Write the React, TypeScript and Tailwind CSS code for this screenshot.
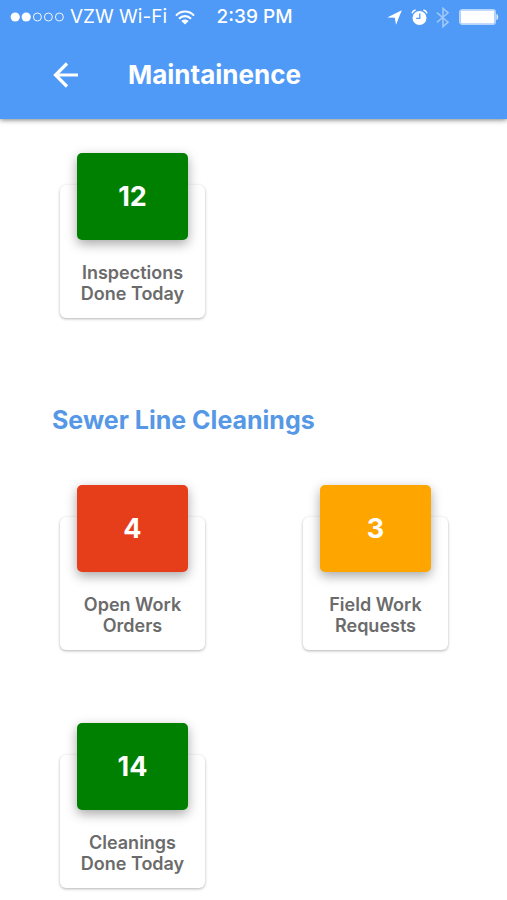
import React from 'react'

type Stat = {
  value: number
  lines: [string, string]
  color: string
}

const inspectionStats: Stat[] = [
  { value: 12, lines: ['Inspections', 'Done Today'], color: 'bg-[#008000]' },
]

const cleaningStats: Stat[] = [
  { value: 4, lines: ['Open Work', 'Orders'], color: 'bg-[#e63e1a]' },
  { value: 3, lines: ['Field Work', 'Requests'], color: 'bg-[#ffa500]' },
  { value: 14, lines: ['Cleanings', 'Done Today'], color: 'bg-[#008000]' },
]

const StatusBar = () => (
  <div className="flex h-[34px] items-center pl-2.5 pr-2 text-[19px] leading-6">
    <div className="flex flex-1 items-center">
      <svg width="56" height="12" viewBox="0 0 56 12" fill="none" stroke="currentColor" aria-label="Signal">
        <circle cx="5.2" cy="6" r="4.6" fill="currentColor" stroke="none" />
        <circle cx="16.2" cy="6" r="4.6" fill="currentColor" stroke="none" />
        <circle cx="27.4" cy="6" r="4" strokeWidth="0.9" />
        <circle cx="38.4" cy="6" r="4" strokeWidth="0.9" />
        <circle cx="49.4" cy="6" r="4" strokeWidth="0.9" />
      </svg>
      <span className="ml-1 whitespace-nowrap">VZW Wi-Fi</span>
      <svg className="ml-2" width="20" height="15" viewBox="0 0 20 15" fill="none" stroke="currentColor" strokeWidth="2.1" aria-label="Wi-Fi">
        <path d="M1 5.6C6 .2 14 .2 19 5.6" />
        <path d="M4 8.8C7.4 5.2 12.6 5.2 16 8.8" />
        <path d="M10 14.6L6.4 11C8.4 9 11.6 9 13.6 11Z" fill="currentColor" stroke="none" />
      </svg>
    </div>
    <time className="font-medium">2:39 PM</time>
    <div className="flex flex-1 items-center justify-end">
      <svg width="15" height="15" viewBox="0 0 15 15" fill="currentColor" aria-label="Location">
        <path d="M14.8.2L9 14.8L7.8 7.8L.2 7.4Z" />
      </svg>
      <svg className="ml-[9px]" width="17" height="17" viewBox="0 0 17 17" fill="none" stroke="currentColor" aria-label="Alarm">
        <circle cx="8.5" cy="9" r="7" fill="currentColor" stroke="none" />
        <path d="M1 4.4C1.5 2.6 2.8 1.4 4.6 1M16 4.4C15.5 2.6 14.2 1.4 12.4 1" strokeWidth="1.5" />
        <path d="M8.8 4.6V9.4H5.2" stroke="#4f99f7" strokeWidth="1.3" />
      </svg>
      <svg className="ml-2 opacity-45" width="14" height="21" viewBox="0 0 14 21" fill="none" stroke="currentColor" strokeWidth="1.6" aria-label="Bluetooth">
        <path d="M1 5.6L12 15.2L7 19.6V1.4L12 5.8L1 15.4" />
      </svg>
      <svg className="ml-[9px]" width="40" height="16" viewBox="0 0 40 16" aria-label="Battery">
        <rect x="0.7" y="0.7" width="35.6" height="14.6" rx="2.6" fill="none" stroke="currentColor" strokeOpacity="0.6" strokeWidth="1.4" />
        <rect x="1.6" y="1.6" width="33.8" height="12.8" rx="1.4" fill="currentColor" />
        <path d="M37.4 5C39.8 5.4 39.8 10.6 37.4 11Z" fill="currentColor" fillOpacity="0.8" />
      </svg>
    </div>
  </div>
)

const StatCard = ({ stat }: { stat: Stat }) => (
  <article className="mt-8 flex w-[145px] flex-col items-center rounded-md bg-white pb-3.5 shadow-[0_1px_3px_rgba(0,0,0,0.3)]">
    <div
      className={`-mt-8 flex h-[87px] w-[111px] items-center justify-center rounded-[5px] text-[27px] font-bold leading-8 text-white shadow-[0_4px_12px_rgba(0,0,0,0.35)] ${stat.color}`}
    >
      {stat.value}
    </div>
    <h3 className="mt-[22px] text-center text-lg font-semibold leading-[21px] text-[#6b6b6b]">
      {stat.lines[0]}
      <br />
      {stat.lines[1]}
    </h3>
  </article>
)

const StatGrid = ({ stats }: { stats: Stat[] }) => (
  <div className="grid grid-cols-2 justify-items-center gap-y-[73px] pl-[11px] pr-2.5">
    {stats.map((stat) => (
      <StatCard key={stat.lines.join(' ')} stat={stat} />
    ))}
  </div>
)

const App = () => {
  return (
    <div className="bg-white font-['Inter','Liberation_Sans',sans-serif]">
      <header className="bg-[#4f99f7] pb-5 text-white shadow-[0_1px_5px_rgba(0,0,0,0.5)]">
        <StatusBar />
        <div className="mt-[17px] flex h-12 items-center pl-[52px]">
          <button type="button" aria-label="Back" className="p-px">
            <svg width="26" height="26" viewBox="0 0 26 26" fill="none" stroke="currentColor" strokeWidth="3.2">
              <path d="M25 13H2.5M14 1.5L2.5 13L14 24.5" />
            </svg>
          </button>
          <h1 className="ml-12 text-[26px] font-bold leading-8">Maintainence</h1>
        </div>
      </header>

      <main className="pb-3 pt-[34px]">
        <StatGrid stats={inspectionStats} />
        <h2 className="mb-[49px] mt-[86px] pl-[52px] text-[25px] font-bold leading-8 text-[#5698e6]">
          Sewer Line Cleanings
        </h2>
        <StatGrid stats={cleaningStats} />
      </main>
    </div>
  )
}

export default App
